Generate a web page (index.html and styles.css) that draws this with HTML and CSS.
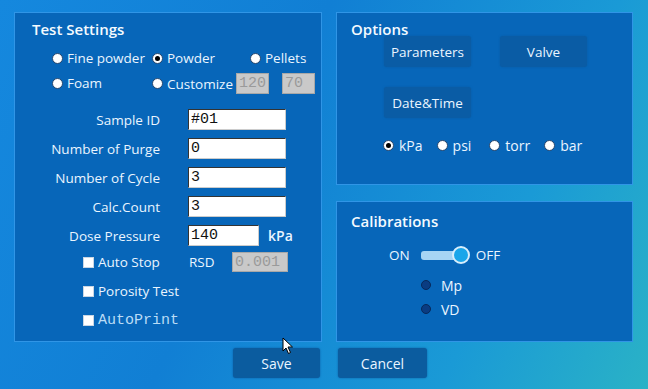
FILE: index.html
```html
<!DOCTYPE html>
<html lang="en">
<head>
    <meta charset="UTF-8">
    <title>Test Settings</title>
    <link rel="stylesheet" href="styles.css">
</head>
<body>
<div class="screen">
    <div class="panels">
        <div class="panel test-settings">
            <h2 class="panel-title">Test Settings</h2>
            <div class="sample-types">
                <label class="radio"><span class="dot"></span>Fine powder</label>
                <label class="radio"><span class="dot checked"></span>Powder</label>
                <label class="radio"><span class="dot"></span>Pellets</label>
                <label class="radio"><span class="dot"></span>Foam</label>
                <div class="custom-row">
                    <label class="radio"><span class="dot"></span>Customize</label>
                    <span class="field disabled small">120</span>
                    <span class="field disabled small">70</span>
                </div>
            </div>

            <div class="form-rows">
                <div class="form-row"><span class="form-label">Sample ID</span><span class="field">#01</span></div>
                <div class="form-row"><span class="form-label">Number of Purge</span><span class="field">0</span></div>
                <div class="form-row"><span class="form-label">Number of Cycle</span><span class="field">3</span></div>
                <div class="form-row"><span class="form-label">Calc.Count</span><span class="field">3</span></div>
                <div class="form-row"><span class="form-label">Dose Pressure</span><span class="field short">140</span><span class="unit">kPa</span></div>
            </div>

            <div class="checks">
                <div class="check-row">
                    <label class="check"><span class="box"></span>Auto Stop</label>
                    <span class="rsd">RSD</span>
                    <span class="field disabled rsd-field">0.001</span>
                </div>
                <div class="check-row">
                    <label class="check"><span class="box"></span>Porosity Test</label>
                </div>
                <div class="check-row">
                    <label class="check mono"><span class="box"></span>AutoPrint</label>
                </div>
            </div>
        </div>

        <div class="side">
            <div class="panel options">
                <h2 class="panel-title">Options</h2>
                <div class="option-buttons">
                    <button class="btn">Parameters</button>
                    <button class="btn">Valve</button>
                    <button class="btn">Date&amp;Time</button>
                </div>
                <div class="units">
                    <label class="radio"><span class="dot checked"></span>kPa</label>
                    <label class="radio"><span class="dot"></span>psi</label>
                    <label class="radio"><span class="dot"></span>torr</label>
                    <label class="radio"><span class="dot"></span>bar</label>
                </div>
            </div>

            <div class="panel calibrations">
                <h2 class="panel-title">Calibrations</h2>
                <div class="toggle-row">
                    <span>ON</span>
                    <span class="toggle"><span class="knob"></span></span>
                    <span>OFF</span>
                </div>
                <div class="cal-options">
                    <label class="radio dark"><span class="dot"></span>Mp</label>
                    <label class="radio dark"><span class="dot"></span>VD</label>
                </div>
            </div>
        </div>
    </div>

    <div class="footer">
        <button class="btn footer-btn">Save</button>
        <button class="btn footer-btn">Cancel</button>
    </div>

    <svg class="cursor" width="12" height="18" viewBox="0 0 12 18">
        <path d="M1 1 L1 14 L4 11 L6.5 16.5 L8.5 15.5 L6 10 L10.5 10 Z" fill="#fff" stroke="#000" stroke-width="1"/>
    </svg>
</div>
</body>
</html>
```

FILE: styles.css
```css
* {
    box-sizing: border-box;
}
body {
    margin: 0;
    width: 648px;
    height: 389px;
    overflow: hidden;
    font-family: "Open Sans", "Noto Sans", sans-serif;
    font-size: 13.5px;
    color: #eaf5ff;
    background: linear-gradient(115deg, #1588de 0%, #117fd4 40%, #1a9ad6 75%, #2ab2c6 100%);
}
.screen {
    position: relative;
    height: 389px;
    padding: 12px 15px 0 14px;
}
.panels {
    display: grid;
    grid-template-columns: 308px 297px;
    gap: 14px;
}
.panel {
    background: #0766b9;
    border: 1px solid #3095e6;
}
.panel-title {
    margin: 0;
    font-size: 15px;
    font-weight: 600;
    line-height: 20px;
    color: #f4faff;
}

/* test settings */
.test-settings {
    height: 330px;
    padding: 6px 0 0 17px;
}
.sample-types {
    display: grid;
    grid-template-columns: 100px 98px auto;
    row-gap: 5px;
    margin: 9px 0 0 20px;
    font-weight: 500;
}
.custom-row {
    grid-column: 2 / 4;
    display: flex;
    align-items: center;
}
.radio {
    display: flex;
    align-items: center;
    height: 20px;
    white-space: nowrap;
}
.dot {
    width: 11px;
    height: 11px;
    margin-right: 4px;
    border-radius: 50%;
    background: #fff;
    border: 1px solid #27476e;
    position: relative;
    flex: none;
}
.dot.checked::after {
    content: "";
    position: absolute;
    left: 2px;
    top: 2px;
    width: 5px;
    height: 5px;
    border-radius: 50%;
    background: #000;
}
.field {
    display: inline-block;
    width: 98px;
    height: 21px;
    padding: 1px 2px;
    background: #fff;
    border: 1px solid #333;
    border-right-color: #ccc;
    border-bottom-color: #ccc;
    font-family: "Liberation Mono", "DejaVu Sans Mono", monospace;
    font-size: 15px;
    line-height: 18px;
    color: #111;
}
.field.disabled {
    background: #c9c9c9;
    color: #9a9a9a;
    border: 1px solid #a8a8a8;
}
.field.small {
    width: 33px;
    margin-left: 3px;
}
.field.small + .field.small {
    margin-left: 13px;
}
.form-rows {
    display: flex;
    flex-direction: column;
    gap: 8px;
    margin-top: 15px;
}
.form-row {
    display: flex;
    align-items: center;
    height: 21px;
}
.form-label {
    width: 128px;
    text-align: right;
    margin-right: 28px;
    font-weight: 500;
}
.field.short {
    width: 71px;
}
.unit {
    margin-left: 9px;
    font-weight: 600;
    font-size: 14px;
}
.checks {
    display: flex;
    flex-direction: column;
    gap: 8px;
    margin: 6px 0 0 51px;
}
.check-row {
    display: flex;
    align-items: center;
    height: 20px;
}
.check-row + .check-row {
    margin-top: 1px;
}
.check {
    display: flex;
    align-items: center;
    width: 106px;
    font-weight: 500;
}
.box {
    width: 11px;
    height: 11px;
    margin-right: 4px;
    background: #fff;
    border: 1px solid #c9d6e4;
    flex: none;
}
.check.mono {
    font-family: "Liberation Mono", "DejaVu Sans Mono", monospace;
    font-size: 15px;
    color: #b9dcf6;
}
.rsd {
    width: 43px;
    font-weight: 500;
}
.rsd-field {
    width: 56px;
    height: 20px;
}

/* right column */
.side {
    display: flex;
    flex-direction: column;
    gap: 16px;
}
.options {
    height: 173px;
    padding: 6px 0 0 14px;
}
.option-buttons {
    display: grid;
    grid-template-columns: 87px 87px;
    column-gap: 29px;
    row-gap: 20px;
    margin: -3px 0 0 33px;
}
.btn {
    height: 31px;
    border: none;
    border-radius: 3px;
    background: #0a5ca5;
    box-shadow: 0 0 2px #0a5aa0;
    color: #eaf5ff;
    font-family: "Open Sans", "Noto Sans", sans-serif;
    font-size: 13.5px;
    font-weight: 500;
    padding: 0;
}
.units {
    display: flex;
    align-items: center;
    margin: 17px 0 0 32px;
    font-weight: 500;
    font-size: 14px;
}
.units .radio {
    margin-right: 14px;
}
.units .radio:nth-child(2) {
    margin-right: 18px;
}
.units .dot {
    margin-right: 5px;
}
.calibrations {
    height: 141px;
    padding: 9px 0 0 14px;
}
.toggle-row {
    display: flex;
    align-items: center;
    height: 20px;
    margin: 14px 0 0 38px;
    font-weight: 500;
}
.toggle {
    position: relative;
    width: 44px;
    height: 9px;
    margin: 0 11px;
    border-radius: 3px;
    background: #a6d4f4;
}
.knob {
    position: absolute;
    right: -5px;
    top: -5px;
    width: 18px;
    height: 18px;
    border-radius: 50%;
    background: #1aa6ea;
    border: 2px solid #d8eefc;
}
.cal-options {
    display: flex;
    flex-direction: column;
    gap: 4px;
    margin: 10px 0 0 70px;
    font-weight: 500;
    font-size: 14px;
}
.radio.dark .dot {
    width: 10px;
    height: 10px;
    margin-right: 10px;
    background: #0a3c82;
    border: 1px solid #06285a;
}

/* footer */
.footer {
    display: flex;
    gap: 18px;
    margin: 6px 0 0 219px;
}
.footer-btn {
    width: 87px;
    height: 30px;
    background: #0b5c9f;
    font-size: 14px;
}
.footer-btn + .footer-btn {
    width: 89px;
}
.cursor {
    position: absolute;
    left: 282px;
    top: 337px;
}
```
